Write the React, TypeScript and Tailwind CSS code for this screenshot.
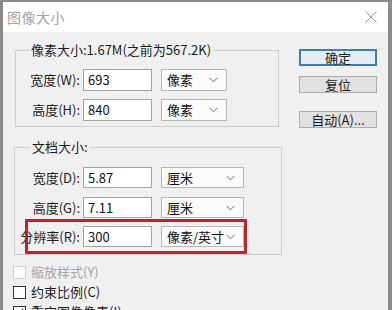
import React from "react";

const font = "font-['Noto_Sans_CJK_SC','Noto_Sans',sans-serif]";

function Chevron() {
  return (
    <svg width="9" height="6" viewBox="0 0 9 6" className="shrink-0">
      <polyline points="0.5,0.8 4.5,4.8 8.5,0.8" fill="none" stroke="#707070" strokeWidth="1" />
    </svg>
  );
}

function Row({
  label,
  value,
  unit,
  selW,
  h,
  labelW,
  className = "",
}: {
  label: string;
  value: string;
  unit: string;
  selW: number;
  h: string;
  labelW: string;
  className?: string;
}) {
  return (
    <div className={`flex items-center ${className}`}>
      <div className={`${labelW} text-right pr-[3px] text-[13px] leading-[16px] text-[#1e1e1e] whitespace-nowrap`}>{label}</div>
      <div className={`w-[69px] ${h} border border-[#a5a5a5] bg-white flex items-center pl-[4px] text-[13px] leading-[16px] text-[#111]`}>
        {value}
      </div>
      <div
        className={`ml-[9px] ${h} border border-[#b8b8b8] bg-[#fbfbfb] flex items-center justify-between pl-[5px] pr-[8px] text-[13px] leading-[16px] text-[#111]`}
        style={{ width: selW }}
      >
        <span>{unit}</span>
        <Chevron />
      </div>
    </div>
  );
}

function Check({ label, disabled, checked, className = "" }: { label: string; disabled?: boolean; checked?: boolean; className?: string }) {
  return (
    <div className={`flex items-center h-[20px] ${className}`}>
      <div
        className={`w-[13px] h-[13px] border bg-white flex items-center justify-center ${disabled ? "border-[#d2d2d2]" : "border-[#333333]"}`}
      >
        {checked && (
          <svg width="9" height="8" viewBox="0 0 9 8">
            <polyline points="1,4 3.5,6.5 8,1" fill="none" stroke="#222" strokeWidth="1.3" />
          </svg>
        )}
      </div>
      <span className={`ml-[5px] text-[13px] leading-[16px] ${disabled ? "text-[#a6a6a6]" : "text-[#1e1e1e]"}`}>{label}</span>
    </div>
  );
}

export default function App() {
  return (
    <div className={`w-[392px] h-[310px] overflow-hidden bg-[#8a8a8a] pl-[3px] pt-[2px] pr-[4px] ${font}`}>
      <div className="w-full h-[308px] bg-[#f0f0f0] flex flex-col">
        <div className="h-[30px] bg-white flex items-center justify-between pl-[4px] pr-[11px] shrink-0">
          <span className="text-[14px] leading-[18px] text-[#a3a3a3] tracking-[0.5px]">图像大小</span>
          <svg width="12" height="12" viewBox="0 0 12 12">
            <path d="M0.5 0.5 L11.5 11.5 M11.5 0.5 L0.5 11.5" stroke="#9a9a9a" strokeWidth="1" />
          </svg>
        </div>
        <div className="flex">
          <div className="ml-[10px] flex flex-col">
            <div className="relative ml-[2px] mt-[18px] w-[264px] h-[77px] border border-[#cfcfcf] pt-[18px]">
              <span className="absolute left-[13px] top-[-9px] bg-[#f0f0f0] px-[2px] text-[13px] leading-[16px] text-[#1e1e1e] whitespace-nowrap">
                像素大小:1.67M(之前为567.2K)
              </span>
              <Row label="宽度(W):" value="693" unit="像素" selW={66} h="h-[22px]" labelW="w-[67px]" />
              <Row label="高度(H):" value="840" unit="像素" selW={66} h="h-[22px]" labelW="w-[67px]" className="mt-[8px]" />
            </div>
            <div className="relative ml-[1px] mt-[20px] w-[268px] h-[108px] border border-[#cfcfcf] pt-[19px]">
              <span className="absolute left-[15px] top-[-9px] bg-[#f0f0f0] px-[2px] text-[13px] leading-[16px] text-[#1e1e1e] whitespace-nowrap">
                文档大小:
              </span>
              <Row label="宽度(D):" value="5.87" unit="厘米" selW={83} h="h-[21px]" labelW="w-[68px]" />
              <Row label="高度(G):" value="7.11" unit="厘米" selW={83} h="h-[21px]" labelW="w-[68px]" className="mt-[9px]" />
              <Row label="分辨率(R):" value="300" unit="像素/英寸" selW={83} h="h-[21px]" labelW="w-[68px]" className="mt-[8px]" />
              <div className="absolute left-[10px] top-[71px] w-[222px] h-[35px] border-[3px] border-[#b8262c] rounded-[1px]" />
            </div>
            <Check label="缩放样式(Y)" disabled className="mt-[7px]" />
            <Check label="约束比例(C)" />
            <Check label="重定图像像素(I):" checked />
          </div>
          <div className="ml-[17px] mt-[17px] flex flex-col">
            <div className="w-[78px] h-[17px] border-2 border-[#3c7db3] bg-[#e4edf4] flex items-center justify-center text-[13px] leading-[14px] text-[#1e1e1e]">
              确定
            </div>
            <div className="mt-[10px] w-[78px] h-[17px] border border-[#adadad] bg-[#e1e1e1] flex items-center justify-center text-[13px] leading-[14px] text-[#1e1e1e]">
              复位
            </div>
            <div className="mt-[18px] w-[78px] h-[17px] border border-[#adadad] bg-[#e1e1e1] flex items-center justify-center text-[13px] leading-[14px] text-[#1e1e1e]">
              自动(A)...
            </div>
          </div>
        </div>
      </div>
    </div>
  );
}
